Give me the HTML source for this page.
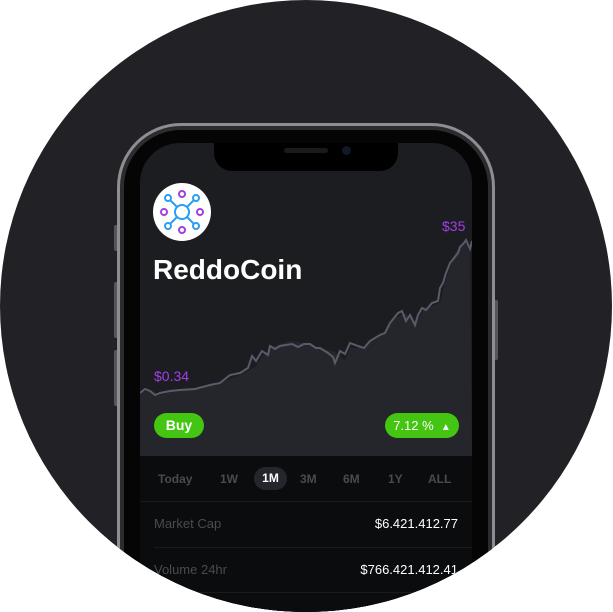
<!DOCTYPE html>
<html><head><style>
html,body{margin:0;padding:0;background:#fff;width:613px;height:612px;overflow:hidden;font-family:"Liberation Sans",sans-serif}
.circ{position:absolute;left:0;top:0;width:612px;height:612px;border-radius:50%;background:#222226;overflow:hidden}
.frame{position:absolute;left:117px;top:123px;width:378px;height:489px;border-radius:64px 64px 0 0;background:#8d8d92}
.frame1{position:absolute;left:120px;top:126px;width:372px;height:486px;border-radius:61px 61px 0 0;background:#2c2c2e}
.frame2{position:absolute;left:124px;top:130px;width:364px;height:482px;border-radius:57px 57px 0 0;background:#050505}
.screen{position:absolute;left:140px;top:143px;width:332px;height:469px;border-radius:40px 40px 0 0;background:#1c1d21;overflow:hidden}
.notch{position:absolute;left:74px;top:-2px;width:184px;height:30px;background:#000;border-radius:0 0 18px 18px}
.btn{position:absolute;background:#55555a;border-radius:2px}
.t{position:absolute;white-space:nowrap}
</style></head><body>
<div class="circ">
<div class="btn" style="left:114px;top:225px;width:5px;height:26px"></div>
<div class="btn" style="left:114px;top:282px;width:5px;height:56px"></div>
<div class="btn" style="left:114px;top:350px;width:5px;height:56px"></div>
<div class="btn" style="left:493px;top:300px;width:5px;height:60px"></div>
<div class="frame"></div>
<div class="frame1"></div>
<div class="frame2"></div>
<div class="screen">
 <div class="notch"><div style="position:absolute;left:70px;top:7px;width:44px;height:5px;border-radius:3px;background:#1a1a1c"></div><div style="position:absolute;left:128px;top:5px;width:9px;height:9px;border-radius:50%;background:#111827"></div></div>
 <div style="position:absolute;left:0;top:313px;width:332px;height:230px;background:#0b0c0e"></div>
 <svg style="position:absolute;left:0;top:0" width="332" height="313">
  <polygon fill="#25262b" points="0,250 10,247 20,252 30,249 40,248 60,246 80,240 100,232 115,224 125,210 135,203 150,198 165,200 180,205 195,209 205,218 210,205 220,205 235,197 245,190 255,175 265,170 275,180 285,165 300,160 305,140 315,110 325,98 330,110 332,313 0,313"/>
  <polyline fill="none" stroke="#5a5b6a" stroke-width="2" points="0,250 5,246 10,248 15,252 20,250 25,249 30,248 40,247 55,246 70,242 80,240 90,232 100,230 108,225 112,213 116,218 122,208 128,212 130,203 135,206 140,203 146,202 152,201 158,204 164,201 170,201 176,205 180,205 188,210 193,214 195,220 200,208 205,211 210,200 218,203 224,205 230,198 235,195 240,192 245,190 250,180 254,175 258,170 262,168 266,178 270,172 275,182 278,172 282,165 286,167 292,160 298,158 300,145 303,140 306,130 310,120 314,115 318,110 320,104 324,100 326,97 330,106 332,98"/>
 </svg>
 <div style="position:absolute;left:13px;top:40px;width:58px;height:58px;border-radius:50%;background:#fff">
  <svg width="58" height="58" viewBox="0 0 58 58" fill="none" stroke-width="2">
   <g stroke="#2a9df4"><circle cx="29" cy="29" r="7"/><circle cx="15" cy="15" r="3"/><circle cx="43" cy="15" r="3"/><circle cx="15" cy="43" r="3"/><circle cx="43" cy="43" r="3"/>
   <path d="M17 17L24 24M41 17L34 24M17 41L24 34M41 41L34 34"/></g>
   <g stroke="#a23fe0"><circle cx="29" cy="11" r="3"/><circle cx="29" cy="47" r="3"/><circle cx="11" cy="29" r="3"/><circle cx="47" cy="29" r="3"/></g>
  </svg>
 </div>
 <div class="t" style="left:13px;top:111px;font-size:28px;font-weight:bold;color:#fff">ReddoCoin</div>
 <div class="t" style="left:302px;top:75px;font-size:14px;color:#a33ee8">$35</div>
 <div class="t" style="left:14px;top:225px;font-size:14px;color:#a33ee8">$0.34</div>
 <div class="t" style="left:14px;top:270px;width:50px;height:25px;border-radius:13px;background:#44c512;color:#fff;font-size:14px;font-weight:bold;line-height:25px;text-align:center">Buy</div>
 <div class="t" style="left:245px;top:270px;width:74px;height:25px;border-radius:13px;background:#44c512;color:#fff;font-size:13px;line-height:25px;text-align:center">7.12 % &nbsp;<span style="font-size:10px">▲</span></div>
 <div class="t" style="left:0;top:329px;width:332px;font-size:12px;color:#4a4b52;font-weight:bold">
  <span class="t" style="left:18px">Today</span><span class="t" style="left:80px">1W</span>
  <span class="t" style="left:114px;top:-5px;width:33px;height:23px;border-radius:12px;background:#25262b;color:#fff;text-align:center;line-height:23px">1M</span>
  <span class="t" style="left:160px">3M</span><span class="t" style="left:203px">6M</span><span class="t" style="left:248px">1Y</span><span class="t" style="left:288px">ALL</span>
 </div>
 <div style="position:absolute;left:0;top:358px;width:332px;height:1px;background:#1a1b1f"></div>
 <div class="t" style="left:14px;top:373px;font-size:13px;color:#4a4b52">Market Cap</div>
 <div class="t" style="right:14px;top:373px;font-size:13px;color:#fff">$6.421.412.77</div>
 <div style="position:absolute;left:14px;top:404px;width:318px;height:1px;background:#1a1b1f"></div>
 <div class="t" style="left:14px;top:419px;font-size:13px;color:#4a4b52">Volume 24hr</div>
 <div class="t" style="right:14px;top:419px;font-size:13px;color:#fff">$766.421.412.41</div>
 <div style="position:absolute;left:14px;top:449px;width:318px;height:1px;background:#1a1b1f"></div>
</div>
</div>
</body></html>
